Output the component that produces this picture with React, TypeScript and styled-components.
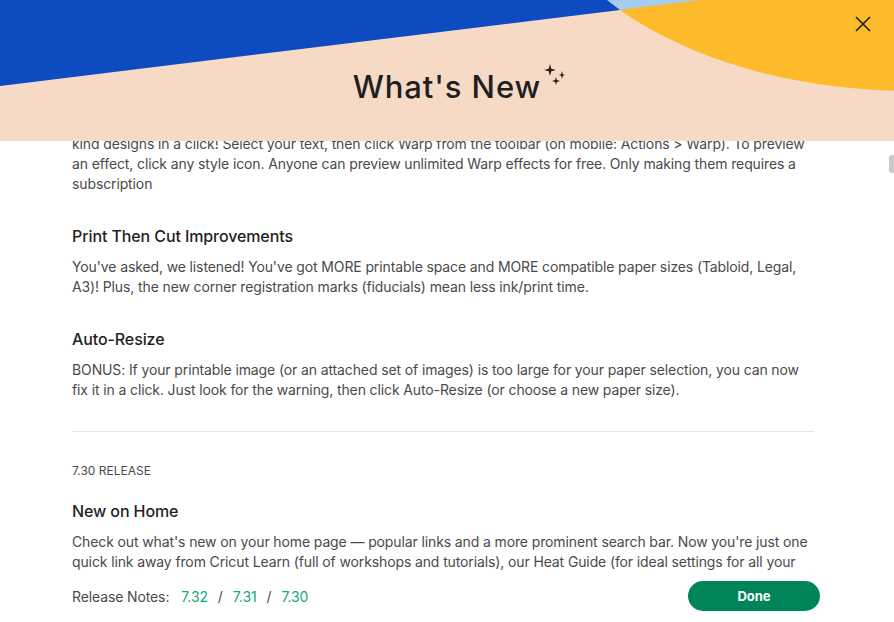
import React, { useLayoutEffect, useRef } from 'react';
import styled, { createGlobalStyle } from 'styled-components';

const colors = {
  peach: '#f7dac6',
  blue: '#0f4bc0',
  sky: '#a7cdee',
  yellow: '#fdbb2c',
  ink: '#1f1f1f',
  text: '#4a4a4a',
  line: '#e6e6e6',
  green: '#00855b',
  link: '#13a878',
  thumb: '#c9c9c9',
};

type Note = { title: string; body: React.ReactNode };
type Release = { version: string; notes: Note[] };

const releases: Release[] = [
  {
    version: '7.32',
    notes: [
      {
        title: 'Warp Text',
        body: (
          <>
            Bend it, arch it, wave it! Warp turns ordinary text into one-of-a-
            <br />
            kind designs in a click! Select your text, then click Warp from the toolbar (on mobile: Actions &gt; Warp). To preview
            an effect, click any style icon. Anyone can preview unlimited Warp effects for free. Only making them requires a
            subscription
          </>
        ),
      },
      {
        title: 'Print Then Cut Improvements',
        body: "You've asked, we listened! You've got MORE printable space and MORE compatible paper sizes (Tabloid, Legal, A3)! Plus, the new corner registration marks (fiducials) mean less ink/print time.",
      },
      {
        title: 'Auto-Resize',
        body: 'BONUS: If your printable image (or an attached set of images) is too large for your paper selection, you can now fix it in a click. Just look for the warning, then click Auto-Resize (or choose a new paper size).',
      },
    ],
  },
  {
    version: '7.30',
    notes: [
      {
        title: 'New on Home',
        body: "Check out what's new on your home page — popular links and a more prominent search bar. Now you're just one quick link away from Cricut Learn (full of workshops and tutorials), our Heat Guide (for ideal settings for all your heat transfer projects) and more.",
      },
      {
        title: 'Search Improvements',
        body: 'Finding the perfect image or project is easier than ever. Search results now load faster and show more of what you are looking for, with filters that stay put while you browse.',
      },
    ],
  },
];

const versions = ['7.32', '7.31', '7.30'];

export default function App() {
  const scrollRef = useRef<HTMLDivElement>(null);
  const firstRef = useRef<HTMLParagraphElement>(null);

  useLayoutEffect(() => {
    if (scrollRef.current && firstRef.current) {
      scrollRef.current.scrollTop = firstRef.current.offsetTop + 27;
    }
  }, []);

  return (
    <>
      <GlobalStyle />
      <Modal>
        <Header>
          <HeaderArt viewBox="0 0 894 141" preserveAspectRatio="none" aria-hidden>
            <rect width="894" height="141" fill={colors.peach} />
            <ellipse cx="910" cy="-150" rx="388" ry="241" fill={colors.yellow} />
            <polygon points="0,0 700,0 0,86" fill={colors.sky} />
            <polygon points="0,0 607,0 620,10 0,86" fill={colors.blue} />
          </HeaderArt>
          <Title>
            What's New
            <Sparkles viewBox="0 0 26 26" aria-hidden>
              <path d="M8 1 L9.3 5.7 L14 7 L9.3 8.3 L8 13 L6.7 8.3 L2 7 L6.7 5.7 Z" />
              <path d="M20 8 L20.8 11.2 L23 12 L20.8 12.8 L20 16 L19.2 12.8 L17 12 L19.2 11.2 Z" />
              <path d="M14 14 L14.9 17.1 L18 18 L14.9 18.9 L14 22 L13.1 18.9 L10 18 L13.1 17.1 Z" />
            </Sparkles>
          </Title>
          <CloseButton aria-label="Close">
            <svg width="16" height="16" viewBox="0 0 16 16">
              <path d="M1 1 L15 15 M15 1 L1 15" stroke={colors.ink} strokeWidth="1.6" fill="none" />
            </svg>
          </CloseButton>
        </Header>

        <Body>
          <Scroller ref={scrollRef}>
            <Content>
              {releases.map((release, ri) => (
                <ReleaseBlock key={release.version} $first={ri === 0}>
                  <ReleaseLabel>{release.version} RELEASE</ReleaseLabel>
                  {release.notes.map((note, ni) => (
                    <NoteBlock key={note.title}>
                      <NoteTitle>{note.title}</NoteTitle>
                      <NoteBody ref={ri === 0 && ni === 0 ? firstRef : undefined}>{note.body}</NoteBody>
                    </NoteBlock>
                  ))}
                </ReleaseBlock>
              ))}
            </Content>
          </Scroller>
          <ScrollThumb />
        </Body>

        <Footer>
          <Versions>
            <VersionsLabel>Release Notes:</VersionsLabel>
            {versions.map((v, i) => (
              <React.Fragment key={v}>
                {i > 0 && <Slash>/</Slash>}
                <VersionLink href="#">{v}</VersionLink>
              </React.Fragment>
            ))}
          </Versions>
          <DoneButton>Done</DoneButton>
        </Footer>
      </Modal>
    </>
  );
}

const GlobalStyle = createGlobalStyle`
  html, body, #root {
    margin: 0;
    height: 100%;
  }
  body {
    font-family: Inter, "Noto Sans", sans-serif;
    background: #fff;
  }
`;

const Modal = styled.div`
  display: flex;
  flex-direction: column;
  height: 100vh;
  background: #fff;
`;

const Header = styled.header`
  position: relative;
  flex: 0 0 141px;
  display: flex;
  align-items: center;
  justify-content: center;
  overflow: hidden;
`;

const HeaderArt = styled.svg`
  position: absolute;
  inset: 0;
  width: 100%;
  height: 100%;
`;

const Title = styled.h1`
  position: relative;
  margin: 32px 0 0;
  font-size: 31px;
  line-height: 38px;
  font-weight: 500;
  color: ${colors.ink};
  letter-spacing: 0.9px;
`;

const Sparkles = styled.svg`
  position: absolute;
  right: -27px;
  top: -5px;
  width: 26px;
  height: 26px;
  fill: ${colors.ink};
`;

const CloseButton = styled.button`
  position: absolute;
  top: 16px;
  right: 23px;
  width: 16px;
  height: 16px;
  padding: 0;
  border: 0;
  background: none;
  cursor: pointer;
  display: flex;
`;

const Body = styled.div`
  position: relative;
  flex: 1;
  min-height: 0;
  display: flex;
`;

const Scroller = styled.div`
  flex: 1;
  position: relative;
  overflow-y: auto;
  scrollbar-width: none;
  &::-webkit-scrollbar {
    display: none;
  }
`;

const ScrollThumb = styled.div`
  position: absolute;
  top: 14px;
  right: 0;
  width: 5px;
  height: 18px;
  border-radius: 3px 0 0 3px;
  background: ${colors.thumb};
`;

const Content = styled.div`
  padding: 20px 80px 30px 72px;
`;

const ReleaseBlock = styled.section<{ $first: boolean }>`
  padding-top: ${p => (p.$first ? '0' : '31px')};
  border-top: ${p => (p.$first ? 'none' : `1px solid ${colors.line}`)};
  margin-top: ${p => (p.$first ? '0' : '31px')};
`;

const ReleaseLabel = styled.div`
  font-size: 12px;
  line-height: 16px;
  color: ${colors.text};
  margin-bottom: 20px;
`;

const NoteBlock = styled.div`
  & + & {
    margin-top: 30px;
  }
`;

const NoteTitle = styled.h2`
  margin: 0 0 9px;
  font-size: 16px;
  line-height: 24px;
  font-weight: 500;
  color: ${colors.ink};
  letter-spacing: -0.1px;
`;

const NoteBody = styled.p`
  margin: 0;
  font-size: 14px;
  line-height: 20px;
  color: ${colors.text};
  letter-spacing: -0.12px;
`;

const Footer = styled.footer`
  flex: 0 0 52px;
  display: flex;
  align-items: center;
  justify-content: space-between;
  padding: 0 74px 0 72px;
`;

const Versions = styled.div`
  display: flex;
  align-items: center;
  font-size: 14px;
  letter-spacing: -0.12px;
  color: ${colors.text};
`;

const VersionsLabel = styled.span`
  margin-right: 12px;
`;

const VersionLink = styled.a`
  color: ${colors.link};
  text-decoration: none;
`;

const Slash = styled.span`
  margin: 0 10px;
  color: ${colors.text};
`;

const DoneButton = styled.button`
  width: 132px;
  height: 30px;
  border: 0;
  border-radius: 15px;
  background: ${colors.green};
  color: #fff;
  font-family: inherit;
  font-size: 13px;
  font-weight: 700;
  cursor: pointer;
`;
